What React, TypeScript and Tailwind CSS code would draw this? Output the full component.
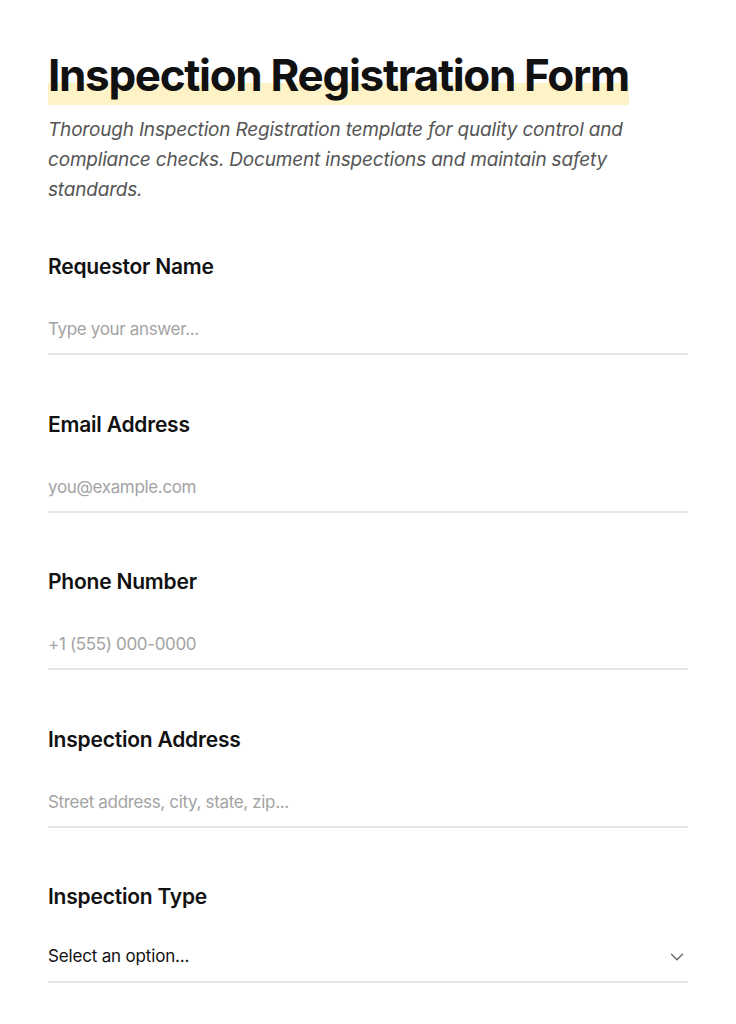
import React from "react";

const fields = [
  { label: "Requestor Name", placeholder: "Type your answer..." },
  { label: "Email Address", placeholder: "you@example.com" },
  { label: "Phone Number", placeholder: "+1 (555) 000-0000" },
  { label: "Inspection Address", placeholder: "Street address, city, state, zip..." },
];

const App = () => {
  return (
    <div
      className="w-full min-h-screen bg-white px-12 pt-[47px] pb-10 text-[#111]"
      style={{ fontFamily: "Inter, 'Noto Sans', sans-serif" }}
    >
      <h1 className="text-[44px] font-bold leading-[56px] tracking-[-0.03em]">
        <span className="bg-[linear-gradient(transparent_62%,#fef3c7_62%)] pb-[3px]">
          Inspection Registration Form
        </span>
      </h1>
      <p className="mt-[12px] w-[600px] text-[19px] italic leading-[30px] tracking-[-0.01em] text-[#555]">
        Thorough Inspection Registration template for quality control and compliance checks. Document
        inspections and maintain safety standards.
      </p>

      <div className="mt-[48px] flex flex-col gap-[55.5px]">
        {fields.map((f) => (
          <div key={f.label} className="flex flex-col gap-6">
            <label className="text-[21px] font-semibold leading-[28px] tracking-[-0.01em]">
              {f.label}
            </label>
            <input
              type="text"
              placeholder={f.placeholder}
              className="h-[50px] w-full border-b-2 border-[#e5e5e5] bg-transparent text-[17px] tracking-[-0.02em] outline-none placeholder:text-[#a3a3a3]"
            />
          </div>
        ))}
        <div className="flex flex-col gap-6">
          <label className="text-[21px] font-semibold leading-[28px] tracking-[-0.01em]">
            Inspection Type
          </label>
          <div className="-mt-[2px] flex h-[50px] w-full items-center justify-between border-b-2 border-[#e5e5e5]">
            <span className="text-[17px] tracking-[-0.01em] text-[#111]">Select an option...</span>
            <svg width="22" height="22" viewBox="0 0 24 24" fill="none" stroke="#666" strokeWidth="1.5" strokeLinecap="round" strokeLinejoin="round">
              <path d="m6 9 6 6 6-6" />
            </svg>
          </div>
        </div>
      </div>
    </div>
  );
};

export default App;
